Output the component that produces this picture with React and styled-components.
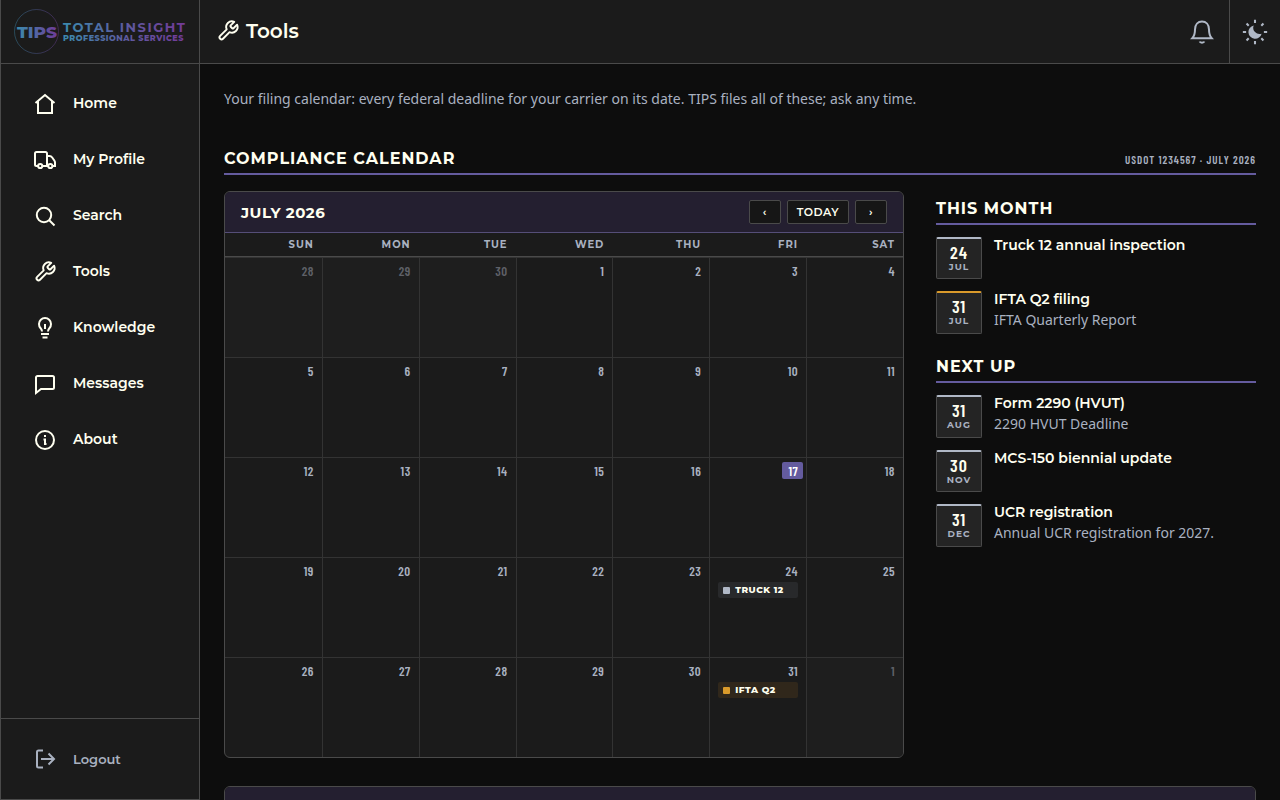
import React from "react";
import styled, { createGlobalStyle } from "styled-components";

const GlobalStyle = createGlobalStyle`
  * {
    box-sizing: border-box;
  }
  body {
    margin: 0;
    background: #0d0d0d;
    color: #fffff0;
    font-family: "Noto Sans", sans-serif;
    font-size: 14px;
  }
`;

const display = `"Montserrat", "Inter", sans-serif`;
const narrow = `"Barlow Condensed", "Liberation Sans Narrow", "Roboto Condensed", sans-serif`;

const Layout = styled.div`
  display: grid;
  grid-template-columns: 200px 1fr;
  height: 100vh;
  overflow: hidden;
`;

const Sidebar = styled.aside`
  display: flex;
  flex-direction: column;
  background: #1b1b1b;
  border: 1px solid #4a4a4a;
  border-top: 0;
`;

const Brand = styled.a`
  display: flex;
  align-items: center;
  height: 64px;
  padding-left: 12px;
  border-bottom: 1px solid #4a4a4a;
`;

const Nav = styled.nav`
  display: flex;
  flex-direction: column;
  flex: 1;
  gap: 8px;
  padding: 16px 8px;
`;

const NavLink = styled.a`
  display: flex;
  align-items: center;
  gap: 16px;
  height: 48px;
  padding: 0 24px;
  color: #fffff0;
  font-family: ${display};
  font-size: 14px;
  font-weight: 600;
  text-decoration: none;
`;

const NavLabel = styled.span`
  padding-bottom: 2px;
  line-height: 16px;
`;

const SidebarFooter = styled.div`
  padding: 16px 8px;
  border-top: 1px solid #4a4a4a;
`;

const LogoutButton = styled.button`
  display: flex;
  align-items: center;
  gap: 16px;
  width: 100%;
  height: 48px;
  padding: 0 24px;
  border: 0;
  background: none;
  color: #a9b1c0;
  font-family: ${display};
  font-size: 13px;
  font-weight: 600;
`;

const Content = styled.div`
  display: flex;
  flex-direction: column;
  min-width: 0;
  min-height: 0;
`;

const TopBar = styled.header`
  display: flex;
  flex-shrink: 0;
  align-items: center;
  height: 64px;
  padding-left: 16px;
  background: #1b1b1b;
  border-bottom: 1px solid #4a4a4a;
`;

const PageTitle = styled.h1`
  display: flex;
  flex: 1;
  align-items: center;
  gap: 6px;
  margin: 0;
  padding-bottom: 1px;
  font-family: ${display};
  font-size: 20px;
  font-weight: 600;
  line-height: 24px;
`;

const IconButton = styled.button`
  display: flex;
  align-items: center;
  justify-content: center;
  align-self: stretch;
  width: ${(props) => (props.$divided ? "51px" : "54px")};
  padding: 0;
  border: 0;
  border-left: ${(props) => (props.$divided ? "1px solid #4a4a4a" : "0")};
  background: none;
  color: #b0b8c6;
`;

const Main = styled.main`
  flex: 1;
  padding: 24px;
  overflow-y: auto;
  scrollbar-width: none;
`;

const Intro = styled.p`
  margin: 0 0 31px;
  color: #a9b1c0;
  line-height: 22px;
`;

const SectionHead = styled.div`
  display: flex;
  align-items: center;
  justify-content: space-between;
  height: 34px;
  padding-top: 2px;
  margin-bottom: ${(props) => props.$gap}px;
  border-bottom: 2px solid #645b9e;
`;

const SectionTitle = styled.h2`
  margin: 0;
  font-family: ${display};
  font-size: 16px;
  font-weight: 700;
  letter-spacing: 1px;
  text-transform: uppercase;
`;

const SectionMeta = styled.span`
  padding-top: 2px;
  color: #a9b1c0;
  font-family: ${narrow};
  font-size: 11px;
  font-weight: 600;
  letter-spacing: 1px;
  text-transform: uppercase;
`;

const Columns = styled.div`
  display: grid;
  grid-template-columns: 1fr 320px;
  align-items: start;
  gap: 32px;
`;

const Card = styled.section`
  overflow: hidden;
  background: #1b1b1b;
  border: 1px solid #4a4a4a;
  border-radius: 6px;
`;

const CardHead = styled.div`
  display: flex;
  align-items: center;
  gap: 6px;
  min-height: 41px;
  padding: 8px 16px;
  background: #241f30;
  border-bottom: 1px solid #554e78;
`;

const CardTitle = styled.h3`
  flex: 1;
  margin: 0;
  font-family: ${display};
  font-size: 15px;
  font-weight: 700;
  letter-spacing: 0.5px;
  text-transform: uppercase;
`;

const MonthButton = styled.button`
  min-width: 32px;
  height: 24px;
  padding: 0 9px;
  border: 1px solid #4a4a4a;
  border-radius: 2px;
  background: #161616;
  color: #fffff0;
  font-family: ${display};
  font-size: 11px;
  font-weight: 600;
  line-height: 20px;
  letter-spacing: 0.5px;
`;

const Month = styled.table`
  width: 100%;
  border-spacing: 0;
  table-layout: fixed;
`;

const WeekDay = styled.th`
  height: 24px;
  padding: 0 8px;
  border-bottom: 1px solid #4a4a4a;
  color: #a9b1c0;
  font-family: ${display};
  font-size: 10px;
  font-weight: 700;
  letter-spacing: 1px;
  text-align: right;
  text-transform: uppercase;
`;

const Day = styled.td`
  height: 100px;
  padding: 4px 8px;
  border-top: 1px solid #333;
  border-left: 1px solid #333;
  background: ${(props) => (props.$outside ? "#1e1e1e" : "transparent")};
  color: ${(props) => (props.$outside ? "#5f6168" : "#a9b1c0")};
  vertical-align: top;
  text-align: right;

  &:first-child {
    border-left: 0;
  }
`;

const DayNumber = styled.span`
  display: inline-block;
  margin-right: -5px;
  padding: 1px 5px 0 6px;
  border-radius: 2px;
  background: ${(props) => (props.$today ? "#645b9e" : "none")};
  color: ${(props) => (props.$today ? "#fff" : "inherit")};
  font-family: ${narrow};
  font-size: 13px;
  font-weight: 600;
  line-height: 16px;
  letter-spacing: 0.5px;
  vertical-align: top;
`;

const Chip = styled.div`
  display: flex;
  align-items: center;
  gap: 5px;
  height: 16px;
  margin-top: 1px;
  padding: 0 5px;
  border-radius: 2px;
  background: ${(props) => (props.$warn ? "#30271b" : "#28292b")};
  color: #fffff0;
  font-family: ${display};
  font-size: 9px;
  font-weight: 800;
  line-height: 16px;
  letter-spacing: 0.5px;
  text-transform: uppercase;
  white-space: nowrap;

  &::before {
    content: "";
    width: 7px;
    height: 7px;
    border-radius: 1px;
    background: ${(props) => (props.$warn ? "#d99a2b" : "#b0b8c6")};
  }
`;

const Deadlines = styled.ul`
  display: flex;
  flex-direction: column;
  gap: 12px;
  margin: 0 0 15px;
  padding: 0;
  list-style: none;
`;

const Deadline = styled.li`
  display: flex;
  gap: 12px;
  min-height: 42px;
`;

const DateTile = styled.div`
  width: 46px;
  padding-top: 5px;
  border: 1px solid #4a4a4a;
  border-top: 2px solid ${(props) => (props.$warn ? "#d99a2b" : "#b0b8c6")};
  border-radius: 2px;
  background: #242424;
  text-align: center;
`;

const TileDay = styled.div`
  font-family: ${narrow};
  font-size: 18px;
  font-weight: 600;
  line-height: 17px;
  letter-spacing: 1px;
`;

const TileMonth = styled.div`
  color: #a9b1c0;
  font-family: ${display};
  font-size: 9px;
  font-weight: 700;
  line-height: 11px;
  letter-spacing: 1px;
  text-transform: uppercase;
`;

const DeadlineName = styled.div`
  font-family: ${display};
  font-size: 14px;
  font-weight: 600;
  line-height: 16px;
`;

const DeadlineNote = styled.div`
  margin-top: 2px;
  padding-bottom: 3px;
  color: #a9b1c0;
  line-height: 22px;
`;

const NextCard = styled(Card)`
  margin-top: 28px;
`;

const Icon = ({ children, size = 24 }) => (
  <svg
    width={size}
    height={size}
    viewBox="0 0 24 24"
    fill="none"
    stroke="currentColor"
    strokeWidth="2"
    aria-hidden="true"
  >
    {children}
  </svg>
);

const HomeIcon = () => (
  <Icon>
    <path d="M2.500 11 12 3l9.500 8M5 9.500V21h14V9.500" />
  </Icon>
);

const TruckIcon = () => (
  <Icon>
    <path d="M5 18H3.500A1.500 1.500 0 0 1 2 16.500V5.500A1.500 1.500 0 0 1 3.500 4h9A1.500 1.500 0 0 1 14 5.500V18H9.500M14 8h2.500c1.200 0 2 .5 2.700 1.500l2.100 3c.5.700.700 1.200.700 2V18h-2.500M14 18h1" />
    <circle cx="7.200" cy="18" r="2.100" />
    <circle cx="17.300" cy="18" r="2.100" />
  </Icon>
);

const SearchIcon = () => (
  <Icon>
    <circle cx="11" cy="11" r="7.200" />
    <path d="m16 16 5.500 5.500" />
  </Icon>
);

const WrenchIcon = () => (
  <Icon>
    <path
      transform="translate(.7 .4) scale(.95)"
      strokeLinejoin="round"
      d="M14.700 6.300a1 1 0 0 0 0 1.400l1.600 1.600a1 1 0 0 0 1.400 0l3.770-3.770a6 6 0 0 1-7.940 7.940l-6.910 6.910a2.120 2.120 0 0 1-3-3l6.910-6.910a6 6 0 0 1 7.940-7.940l-3.760 3.760z"
    />
  </Icon>
);

const BulbIcon = () => (
  <Icon>
    <path d="M9 15.500c0-1.500-.5-2.200-1.400-3.300a6 6 0 1 1 8.800 0c-.9 1.100-1.400 1.800-1.400 3.300M12 8v5M8 18h8M9.500 21.500h5" />
  </Icon>
);

const MessageIcon = () => (
  <Icon>
    <path d="M3 21V5.500A1.500 1.500 0 0 1 4.500 4h15A1.500 1.500 0 0 1 21 5.500v10a1.500 1.500 0 0 1-1.500 1.500H8z" />
  </Icon>
);

const InfoIcon = () => (
  <Icon>
    <circle cx="12" cy="12" r="9" />
    <path d="M12 7v2M10.500 11.500H12V16h1.500" />
  </Icon>
);

const LogoutIcon = () => (
  <Icon>
    <path d="M10 3.500H5.500A1.500 1.500 0 0 0 4 5v14a1.500 1.500 0 0 0 1.500 1.500H10M8 12h13M15.500 6.500 21 12l-5.500 5.500" />
  </Icon>
);

const BellIcon = () => (
  <Icon>
    <path d="M2.300 18.200C4.500 15.800 5 13 5 9.500 5 4.500 8 1.500 12 1.500s7 3 7 8c0 3.500.5 6.300 2.700 8.700z" />
    <path d="M9.700 21.500c.5 1.500 4.100 1.500 4.600 0" />
  </Icon>
);

const ThemeIcon = () => (
  <Icon size={26}>
    <path
      d="M10.800 5.900a6.200 6.200 0 1 0 7.300 7.600 5.800 5.800 0 0 1-7.300-7.600z"
      fill="currentColor"
      stroke="none"
    />
    <path
      strokeWidth="1.900"
      d="M12 .8v3M12 20.200v3M.8 12h3M20.200 12h3M4.200 4.200l2 2M17.800 17.800l2 2M19.800 4.200l-2 2M4.200 19.800l2-2"
    />
  </Icon>
);

const Logo = () => (
  <svg width="176" height="48" viewBox="0 0 176 48" role="img" aria-label="TIPS">
    <defs>
      <linearGradient id="badge">
        <stop offset="0" stopColor="#3b8aad" />
        <stop offset="1" stopColor="#6f3b98" />
      </linearGradient>
      <linearGradient id="word" gradientUnits="userSpaceOnUse" x1="50" y1="0" x2="173" y2="0">
        <stop offset="0" stopColor="#3b8aad" />
        <stop offset="0.5" stopColor="#5d5ba0" />
        <stop offset="1" stopColor="#733a98" />
      </linearGradient>
    </defs>
    <circle
      cx="23.500"
      cy="23.500"
      r="22"
      fill="none"
      stroke="url(#badge)"
      strokeWidth="0.600"
      opacity="0.700"
    />
    <g fontFamily="Montserrat, Inter, sans-serif" fontWeight="700">
      <text x="4" y="30" fontSize="17" fontWeight="800" fill="url(#badge)">
        TIPS
      </text>
      <text x="50" y="24" fontSize="13" letterSpacing="1.500" fill="url(#word)">
        TOTAL INSIGHT
      </text>
      <text x="50" y="33" fontSize="8" letterSpacing="0.500" fontWeight="800" fill="url(#word)">
        PROFESSIONAL SERVICES
      </text>
    </g>
  </svg>
);

const links = [
  { label: "Home", icon: <HomeIcon /> },
  { label: "My Profile", icon: <TruckIcon /> },
  { label: "Search", icon: <SearchIcon /> },
  { label: "Tools", icon: <WrenchIcon /> },
  { label: "Knowledge", icon: <BulbIcon /> },
  { label: "Messages", icon: <MessageIcon /> },
  { label: "About", icon: <InfoIcon /> },
];

const weekDays = ["Sun", "Mon", "Tue", "Wed", "Thu", "Fri", "Sat"];

const events = {
  24: { label: "Truck 12" },
  31: { label: "IFTA Q2", warn: true },
};

const thisMonth = [
  { day: 24, month: "Jul", name: "Truck 12 annual inspection" },
  { day: 31, month: "Jul", name: "IFTA Q2 filing", note: "IFTA Quarterly Report", warn: true },
];

const nextUp = [
  { day: 31, month: "Aug", name: "Form 2290 (HVUT)", note: "2290 HVUT Deadline" },
  { day: 30, month: "Nov", name: "MCS-150 biennial update" },
  { day: 31, month: "Dec", name: "UCR registration", note: "Annual UCR registration for 2027." },
];

// July 2026 starts on a Wednesday
const weeks = [0, 1, 2, 3, 4].map((week) =>
  weekDays.map((_, i) => {
    const date = new Date(2026, 6, week * 7 + i - 2);
    return { number: date.getDate(), outside: date.getMonth() !== 6 };
  })
);

const DeadlineGroup = ({ title, items }) => (
  <>
    <SectionHead $gap={12}>
      <SectionTitle>{title}</SectionTitle>
    </SectionHead>
    <Deadlines>
      {items.map((item) => (
        <Deadline key={item.name}>
          <DateTile $warn={item.warn}>
            <TileDay>{item.day}</TileDay>
            <TileMonth>{item.month}</TileMonth>
          </DateTile>
          <div>
            <DeadlineName>{item.name}</DeadlineName>
            {item.note && <DeadlineNote>{item.note}</DeadlineNote>}
          </div>
        </Deadline>
      ))}
    </Deadlines>
  </>
);

const Calendar = () => (
  <Card>
    <CardHead>
      <CardTitle>July 2026</CardTitle>
      <MonthButton aria-label="Previous month">‹</MonthButton>
      <MonthButton>TODAY</MonthButton>
      <MonthButton aria-label="Next month">›</MonthButton>
    </CardHead>
    <Month>
      <thead>
        <tr>
          {weekDays.map((day) => (
            <WeekDay key={day}>{day}</WeekDay>
          ))}
        </tr>
      </thead>
      <tbody>
        {weeks.map((week, i) => (
          <tr key={i}>
            {week.map(({ number, outside }) => (
              <Day key={number} $outside={outside}>
                <DayNumber $today={number === 17}>{number}</DayNumber>
                {!outside && events[number] && (
                  <Chip $warn={events[number].warn}>{events[number].label}</Chip>
                )}
              </Day>
            ))}
          </tr>
        ))}
      </tbody>
    </Month>
  </Card>
);

const App = () => {
  return (
    <>
      <GlobalStyle />
      <Layout>
        <Sidebar>
          <Brand href="#">
            <Logo />
          </Brand>
          <Nav>
            {links.map((link) => (
              <NavLink href="#" key={link.label}>
                {link.icon}
                <NavLabel>{link.label}</NavLabel>
              </NavLink>
            ))}
          </Nav>
          <SidebarFooter>
            <LogoutButton>
              <LogoutIcon />
              Logout
            </LogoutButton>
          </SidebarFooter>
        </Sidebar>
        <Content>
          <TopBar>
            <PageTitle>
              <WrenchIcon />
              Tools
            </PageTitle>
            <IconButton aria-label="Notifications">
              <BellIcon />
            </IconButton>
            <IconButton $divided aria-label="Switch theme">
              <ThemeIcon />
            </IconButton>
          </TopBar>
          <Main>
            <Intro>
              Your filing calendar: every federal deadline for your carrier on
              its date. TIPS files all of these; ask any time.
            </Intro>
            <SectionHead $gap={16}>
              <SectionTitle>Compliance Calendar</SectionTitle>
              <SectionMeta>USDOT 1234567 · July 2026</SectionMeta>
            </SectionHead>
            <Columns>
              <Calendar />
              <div>
                <DeadlineGroup title="This Month" items={thisMonth} />
                <DeadlineGroup title="Next Up" items={nextUp} />
              </div>
            </Columns>
            <NextCard>
              <CardHead />
            </NextCard>
          </Main>
        </Content>
      </Layout>
    </>
  );
};

export default App;
